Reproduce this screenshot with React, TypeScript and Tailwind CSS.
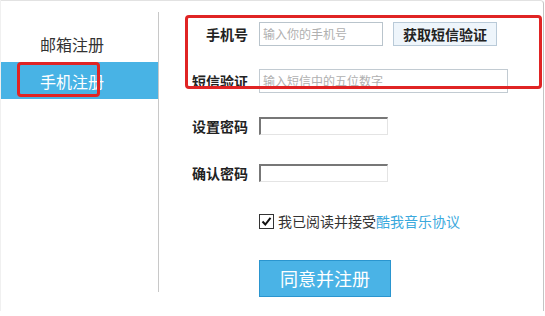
import React from 'react';

const font = { fontFamily: '"Microsoft YaHei", "Noto Sans CJK SC", "Noto Sans", sans-serif' };

const Label: React.FC<{ text: string }> = ({ text }) => (
  <div className="w-[100px] pr-[11px] text-right text-[14px] font-bold text-[#222] leading-none whitespace-nowrap">
    {text}
  </div>
);

const App: React.FC = () => {
  return (
    <div className="w-[545px] h-[316px] bg-white" style={font}>
      <div className="relative w-[544px] h-[311px] border-t border-l border-r border-t-[#e2e2e2] border-l-[#f0f0f0] border-r-[#c4c4c4] rounded-tr-[4px] flex">
        {/* left nav */}
        <div className="w-[158px] mt-[11px] h-[280px] border-r border-[#c8c8c8] pt-[13px] flex flex-col">
          <div className="h-[37px] flex items-center pl-[39px] text-[16px] text-[#333]">邮箱注册</div>
          <div className="h-[37px] flex items-center pl-[39px] text-[16px] text-white bg-[#48b3e5]">手机注册</div>
        </div>

        {/* form */}
        <div className="flex-1 pt-[21px] flex flex-col">
          <div className="flex items-center h-[24px]">
            <Label text="手机号" />
            <div className="w-[124px] h-[24px] border border-[#b9c4cc] flex items-center pl-[3px] text-[12px] text-[#b0b0b0]">
              输入你的手机号
            </div>
            <button className="ml-[10px] w-[104px] h-[24px] bg-[#eef5fb] border border-[#b9cad8] text-[14px] font-bold text-[#222] flex items-center justify-center">
              获取短信验证
            </button>
          </div>

          <div className="flex items-center h-[24px] mt-[23px]">
            <Label text="短信验证" />
            <div className="w-[249px] h-[24px] border border-[#c2cbd2] flex items-center pl-[3px] text-[12px] text-[#b0b0b0]">
              输入短信中的五位数字
            </div>
          </div>

          <div className="flex items-center h-[18px] mt-[24px]">
            <Label text="设置密码" />
            <div className="w-[129px] h-[18px] border-2 border-t-[#777] border-l-[#777] border-b-[#e4e4e4] border-r-[#e4e4e4] border-b border-r" />
          </div>

          <div className="flex items-center h-[18px] mt-[29px]">
            <Label text="确认密码" />
            <div className="w-[129px] h-[18px] border-2 border-t-[#777] border-l-[#777] border-b-[#e4e4e4] border-r-[#e4e4e4] border-b border-r" />
          </div>

          <div className="flex items-center h-[16px] mt-[31px] pl-[100px]">
            <div className="w-[15px] h-[15px] border border-[#333] flex items-center justify-center bg-white">
              <svg width="11" height="11" viewBox="0 0 11 11">
                <path d="M1.5 5.5 L4.3 8.5 L9.5 1.8" fill="none" stroke="#111" strokeWidth="2" />
              </svg>
            </div>
            <span className="ml-[4px] text-[14px] text-[#333] leading-none whitespace-nowrap">
              我已阅读并接受<span className="text-[#3ba9dd]">酷我音乐协议</span>
            </span>
          </div>

          <div className="mt-[31px] pl-[100px]">
            <button className="w-[132px] h-[37px] bg-[#4ab3e6] border border-[#2a95cf] text-white text-[18px] flex items-center justify-center">
              同意并注册
            </button>
          </div>
        </div>

        {/* annotation boxes */}
        <div className="absolute left-[16px] top-[61px] w-[83px] h-[35px] border-[3px] border-[#e02424] rounded-[4px]" />
        <div className="absolute left-[184px] top-[14px] w-[357px] h-[74px] border-[3px] border-[#e02424] rounded-[4px]" />
      </div>
    </div>
  );
};

export default App;
